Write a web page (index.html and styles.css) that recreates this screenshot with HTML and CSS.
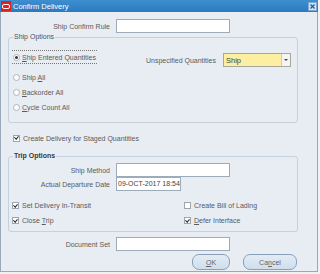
FILE: index.html
```html
<!DOCTYPE html>
<html lang="en">
<head>
    <meta charset="UTF-8">
    <title>Confirm Delivery</title>
    <link rel="stylesheet" href="styles.css">
</head>
<body>
    <div class="window">
        <div class="titlebar">
            <span class="app-icon"><span></span></span>
            <span class="title">Confirm Delivery</span>
            <span class="close">
                <svg width="7" height="7" viewBox="0 0 7 7"><path d="M1.5 1.5 L5.5 5.5 M5.5 1.5 L1.5 5.5" stroke="#1d5f9c" stroke-width="1.3"/></svg>
            </span>
        </div>
        <div class="content">
            <div class="field-row">
                <label class="lbl">Ship Confirm Rule</label>
                <span class="input wide"></span>
            </div>

            <fieldset class="group">
                <legend>Ship Options</legend>
                <div class="options-grid">
                    <div class="radios">
                        <div class="radio-row focused"><span class="radio on"></span><span><u>S</u>hip Entered Quantities</span></div>
                        <div class="radio-row first"><span class="radio"></span><span>Ship <u>A</u>ll</span></div>
                        <div class="radio-row"><span class="radio"></span><span><u>B</u>ackorder All</span></div>
                        <div class="radio-row"><span class="radio"></span><span><u>C</u>ycle Count All</span></div>
                    </div>
                    <div class="unspec">
                        <label>Unspecified Quantities</label>
                        <span class="select">Ship<span class="arrow"></span></span>
                    </div>
                </div>
            </fieldset>

            <div class="check-row staged"><span class="check on"></span><span>Create Delivery for Staged Quantities</span></div>

            <fieldset class="group trip">
                <legend>Trip Options</legend>
                <div class="field-row inner">
                    <label class="lbl">Ship Method</label>
                    <span class="input wide"></span>
                </div>
                <div class="field-row inner">
                    <label class="lbl">Actual Departure Date</label>
                    <span class="input date">09-OCT-2017 18:54</span>
                </div>
                <div class="check-grid">
                    <div class="check-row"><span class="check on"></span><span>Set Delivery In-Transit</span></div>
                    <div class="check-row"><span class="check"></span><span>Create Bill of Lading</span></div>
                    <div class="check-row"><span class="check on"></span><span>Close <u>T</u>rip</span></div>
                    <div class="check-row"><span class="check on"></span><span><u>D</u>efer Interface</span></div>
                </div>
            </fieldset>

            <div class="field-row docset">
                <label class="lbl">Document Set</label>
                <span class="input wide"></span>
            </div>

            <div class="buttons">
                <button class="btn ok"><u>O</u>K</button>
                <button class="btn cancel">Ca<u>n</u>cel</button>
            </div>
        </div>
    </div>
</body>
</html>
```

FILE: styles.css
```css
body {
    margin: 0;
    background-color: #eef1f5;
    font-family: "Liberation Sans", Arial, sans-serif;
    font-size: 7px;
    color: #5a5a5a;
}
.window {
    width: 316px;
    height: 271px;
    border: 1px solid #9aa9ba;
    border-top: none;
    background-color: #e8edf4;
}
.titlebar {
    height: 12px;
    display: flex;
    align-items: center;
    background: linear-gradient(#3e8fd0, #2a7ac0);
    color: #fff;
    font-size: 7.5px;
    margin: 0 -1px;
}
.app-icon {
    width: 10px;
    height: 10px;
    margin: 0 2px 0 1px;
    background-color: #e0201c;
    display: flex;
    align-items: center;
    justify-content: center;
}
.app-icon span {
    width: 6px;
    height: 3px;
    border: 1px solid #fff;
    border-radius: 2px;
}
.title {
    flex: 1;
}
.close {
    width: 7px;
    height: 7px;
    margin-right: 1px;
    background-color: #cfe2f3;
    border: 1px solid #7fa9d0;
    display: flex;
}
.content {
    display: flex;
    flex-direction: column;
}
.field-row {
    display: flex;
    align-items: center;
    gap: 6px;
    height: 14px;
}
.field-row:first-child {
    margin-top: 7px;
}
.lbl {
    width: 109px;
    text-align: right;
}
.input {
    height: 12px;
    border: 1px solid #9eabba;
    background-color: #fff;
    box-sizing: content-box;
    line-height: 12px;
    color: #444;
    padding-left: 1px;
}
.input.wide {
    width: 111px;
}
.input.date {
    width: 62px;
    white-space: nowrap;
    overflow: hidden;
}
.group {
    margin: 0 19px 0 7px;
    padding: 0 0 7px 3px;
    border: 1px solid #c6d1de;
    border-radius: 3px;
}
.group legend {
    padding: 0 1px;
    margin-left: 1px;
    line-height: 8px;
    color: #505050;
}
.options-grid {
    display: flex;
    justify-content: space-between;
    padding-right: 6px;
}
.radios {
    display: flex;
    flex-direction: column;
}
.radio-row {
    display: flex;
    align-items: center;
    gap: 2px;
    height: 15px;
}
.radio-row.focused {
    margin-top: 9px;
    height: 12px;
    padding-left: 1px;
    width: 84px;
    border-top: 1px dotted #777;
    border-bottom: 1px dotted #777;
}
.radio-row.first {
    margin-top: 6px;
}
.radio-row:not(.focused) {
    padding-left: 1px;
}
.radio {
    width: 5px;
    height: 5px;
    border: 1px solid #a8b4c2;
    border-radius: 50%;
    background-color: #fff;
    display: flex;
    align-items: center;
    justify-content: center;
}
.radio.on::after {
    content: "";
    width: 3px;
    height: 3px;
    border-radius: 50%;
    background-color: #333;
}
.unspec {
    display: flex;
    align-items: center;
    gap: 7px;
    height: 14px;
    margin-top: 12px;
}
.select {
    width: 64px;
    height: 12px;
    border: 1px solid #a8a89a;
    background-color: #fcefa1;
    display: flex;
    align-items: center;
    justify-content: space-between;
    padding-left: 2px;
    box-sizing: content-box;
    color: #444;
    font-size: 7.5px;
}
.arrow {
    width: 8px;
    height: 12px;
    background-color: #f4f4f4;
    border-left: 1px solid #ccc;
    display: flex;
    align-items: center;
    justify-content: center;
}
.arrow::after {
    content: "";
    border-left: 2px solid transparent;
    border-right: 2px solid transparent;
    border-top: 2px solid #444;
}
.check-row {
    display: flex;
    align-items: center;
    gap: 3px;
    height: 15px;
}
.check-row.staged {
    margin: 9px 0 8px 12px;
    height: 12px;
}
.check {
    width: 5px;
    height: 5px;
    border: 1px solid #9aa6b4;
    background-color: #fff;
    display: flex;
    align-items: center;
    justify-content: center;
}
.check.on::after {
    content: "";
    width: 2px;
    height: 3px;
    border-right: 1px solid #222;
    border-bottom: 1px solid #222;
    transform: rotate(40deg) translate(-0.5px, -0.5px);
}
.trip {
    padding-bottom: 3px;
}
.trip legend {
    font-weight: bold;
    color: #3a3a3a;
}
.field-row.inner {
    margin-left: -3px;
}
.field-row.inner .lbl {
    width: 101px;
}
.field-row.inner:first-of-type {
    margin-top: 3px;
}
.check-grid {
    display: grid;
    grid-template-columns: 172px 1fr;
    margin-top: 7px;
}
.docset {
    margin-top: 5px;
}
.buttons {
    display: flex;
    justify-content: flex-end;
    gap: 13px;
    margin-top: 3px;
    padding-right: 20px;
}
.btn {
    height: 16px;
    border: 1px solid #8aa0b8;
    border-radius: 7px;
    background: linear-gradient(#e2ecf6, #cfdeed);
    font-family: "Liberation Sans", Arial, sans-serif;
    font-size: 7px;
    color: #666;
    padding: 0;
}
.btn.ok {
    width: 38px;
}
.btn.cancel {
    width: 54px;
}
```
